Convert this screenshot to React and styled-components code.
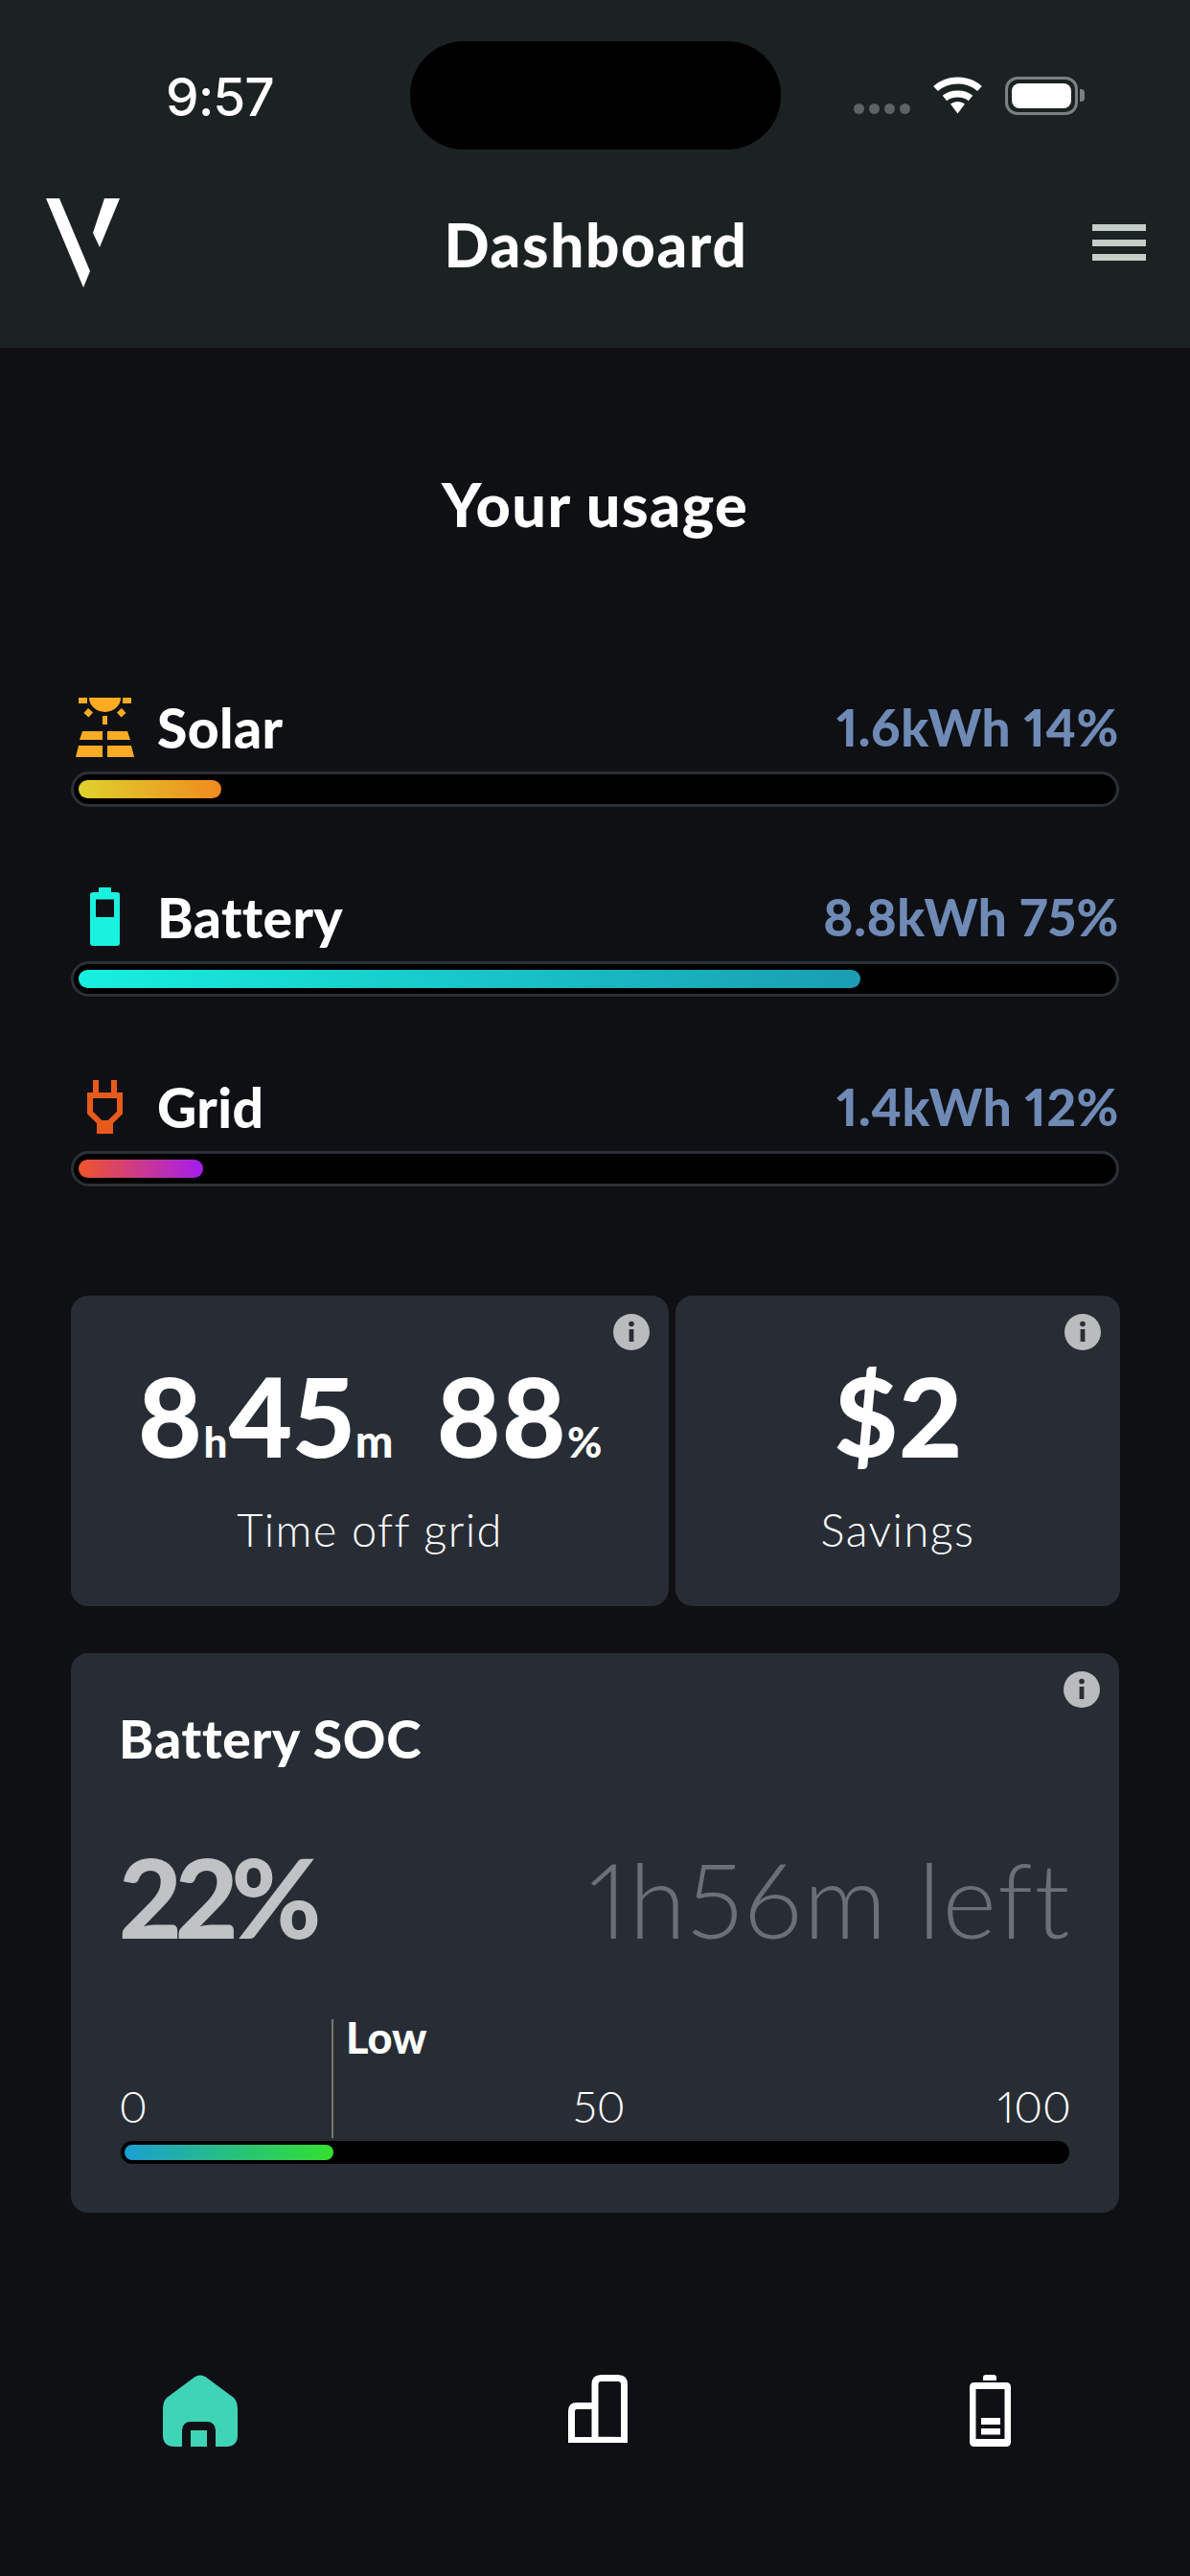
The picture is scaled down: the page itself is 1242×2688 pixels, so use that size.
import React from "react";
import styled, { createGlobalStyle } from "styled-components";

const Global = createGlobalStyle`
  html, body { margin: 0; padding: 0; background: #0e1014; }
  * { box-sizing: border-box; }
  body { font-family: "Lato", "Noto Sans", sans-serif; color: #fff; font-variant-numeric: proportional-nums lining-nums; }
`;

const Page = styled.div`
  width: 1242px;
  height: 2688px;
  background: #0e1014;
  display: flex;
  flex-direction: column;
  overflow: hidden;
`;
const Header = styled.header`
  height: 363px;
  background: #1c2122;
  display: flex;
  flex-direction: column;
`;
const StatusBar = styled.div`
  height: 173px;
  display: grid;
  grid-template-columns: 428px 387px 1fr;
`;
const Time = styled.div`
  padding: 74px 0 0 173px;
  font: 500 55px/54px "Inter", sans-serif;
  letter-spacing: -1px;
  color: #fff;
`;
const Island = styled.div`
  margin-top: 43px;
  height: 113px;
  background: #000;
  border-radius: 56px;
`;
const StatusIcons = styled.div`
  display: flex;
  align-items: flex-start;
  padding: 80px 0 0 76px;
`;
const Dots = styled.div`
  display: flex;
  gap: 5px;
  margin-top: 28px;
  width: 82px;
`;
const Dot = styled.span`
  width: 11px;
  height: 11px;
  border-radius: 50%;
  background: #5d6364;
`;
const Wifi = styled.svg`
  width: 53px;
  height: 39px;
  margin-right: 23px;
`;
const BatteryShell = styled.div`
  width: 76px;
  height: 40px;
  border: 3px solid #7b8081;
  border-radius: 13px;
  padding: 4px;
`;
const BatteryCore = styled.div`
  height: 100%;
  background: #fff;
  border-radius: 8px;
`;
const BatteryNub = styled.div`
  width: 5px;
  height: 13px;
  margin: 13px 0 0 2px;
  background: #7b8081;
  border-radius: 0 4px 4px 0;
`;
const NavBar = styled.nav`
  flex: 1;
  display: grid;
  grid-template-columns: 1fr auto 1fr;
  align-items: flex-start;
  padding: 32px 46px 0 48px;
`;
const Logo = styled.svg`
  width: 78px;
  height: 96px;
`;
const Title = styled.h1`
  margin: 18px 0 0;
  font-size: 62px;
  line-height: 64px;
  font-weight: 900;
  letter-spacing: 1.7px;
`;
const Burger = styled.div`
  justify-self: end;
  margin-top: 29px;
  width: 56px;
  display: flex;
  flex-direction: column;
  gap: 8.5px;
`;
const BurgerLine = styled.span`
  height: 7px;
  background: #c4cdc6;
`;
const Main = styled.main`
  padding: 0 74px;
  display: flex;
  flex-direction: column;
`;
const Heading = styled.h2`
  margin: 131px 0 0;
  height: 64px;
  text-align: center;
  font-size: 63px;
  line-height: 64px;
  font-weight: 900;
  letter-spacing: 1.4px;
`;
const Usage = styled.section`
  margin-top: 169px;
  display: flex;
  flex-direction: column;
  gap: 83px;
`;
const UsageRow = styled.div`
  display: flex;
  flex-direction: column;
  gap: 15px;
`;
const UsageHead = styled.div`
  height: 63px;
  display: flex;
  align-items: center;
  position: relative;
`;
const IconSlot = styled.div`
  width: 91px;
  height: 63px;
  display: flex;
  align-items: center;
  justify-content: center;
  padding-right: 20px;
`;
const UsageLabel = styled.span`
  font-size: 57px;
  font-weight: 900;
  letter-spacing: 0.4px;
  margin-left: -1px;
`;
const UsageValue = styled.span`
  margin-left: auto;
  font-size: 53px;
  font-weight: 900;
  letter-spacing: 0.6px;
  color: #6f8ab5;
`;
const Track = styled.div`
  height: 37px;
  background: #000;
  border: 3px solid #2b2f37;
  border-radius: 19px;
  padding: 6px 5px;
`;
const Fill = styled.div`
  height: 19px;
  border-radius: 10px;
  background: linear-gradient(90deg, ${(p) => p.$from}, ${(p) => p.$to});
`;
const CardRow = styled.section`
  margin-top: 114px;
  display: grid;
  grid-template-columns: 624px 464px;
  gap: 7px;
`;
const Card = styled.div`
  position: relative;
  height: 324px;
  background: #282d35;
  border-radius: 18px;
  display: flex;
  flex-direction: column;
  align-items: center;
  padding-top: 65px;
`;
const InfoBadge = styled.svg`
  position: absolute;
  top: 19px;
  right: 20px;
  width: 38px;
  height: 38px;
`;
const BigStat = styled.div`
  height: 118px;
  display: flex;
  align-items: baseline;
  font-size: 115px;
  line-height: 118px;
  font-weight: 900;
`;
const Unit = styled.span`
  font-size: ${(p) => p.$size || 44}px;
  font-weight: 900;
  margin: 0 ${(p) => p.$right || 0}px 0 1px;
`;
const CardCaption = styled.div`
  margin-top: 33px;
  font-size: 47px;
  line-height: 56px;
  font-weight: 300;
  letter-spacing: 1.4px;
`;
const SocCard = styled.section`
  position: relative;
  margin-top: 49px;
  height: 584px;
  background: #282d35;
  border-radius: 18px;
  padding: 59px 50px 0;
  display: flex;
  flex-direction: column;
`;
const SocTitle = styled.h3`
  margin: 0;
  height: 60px;
  font-size: 55px;
  line-height: 60px;
  font-weight: 900;
  letter-spacing: 0.8px;
`;
const SocStats = styled.div`
  margin-top: 70px;
  display: flex;
  justify-content: space-between;
  align-items: baseline;
`;
const SocPercent = styled.span`
  font-size: 114px;
  line-height: 130px;
  font-weight: 900;
  letter-spacing: -7px;
  color: #c0c2c5;
`;
const SocLeft = styled.span`
  font-size: 108px;
  line-height: 130px;
  font-weight: 300;
  color: #6b6f77;
  letter-spacing: 1.6px;
`;
const Scale = styled.div`
  position: relative;
  margin-top: 61px;
  height: 124px;
  display: flex;
  align-items: flex-end;
  justify-content: space-between;
  font-size: 46px;
  line-height: 50px;
  font-weight: 300;
  padding-bottom: 8px;
`;
const LowMark = styled.div`
  position: absolute;
  left: 222px;
  top: 0;
  width: 2px;
  height: 124px;
  background: #7a7a66;
`;
const LowLabel = styled.span`
  position: absolute;
  left: 237px;
  top: -4px;
  font-size: 45px;
  line-height: 46px;
  font-weight: 900;
`;
const ScaleTick = styled.span`
  margin-left: ${(p) => p.$shift || 0}px;
`;
const SocTrack = styled.div`
  margin: 3px 2px 0;
  height: 24px;
  background: #000;
  border-radius: 12px;
  padding: 4px;
`;
const SocFill = styled.div`
  width: 218px;
  height: 16px;
  border-radius: 8px;
  background: linear-gradient(90deg, #1a9fd2, #33e02f);
`;
const TabBar = styled.nav`
  margin-top: 169px;
  display: grid;
  grid-template-columns: 170px 78px 345px 62px 357px 43px;
  align-items: flex-start;
`;
const TabIcon = styled.svg`
  grid-column: ${(p) => p.$col};
  display: block;
`;

const Info = () => (
  <InfoBadge viewBox="0 0 38 38">
    <circle cx="19" cy="19" r="19" fill="#b9bbbd" />
    <circle cx="19" cy="10.5" r="2.8" fill="#282d35" />
    <rect x="16.6" y="16" width="4.8" height="13" fill="#282d35" />
  </InfoBadge>
);

const SolarIcon = () => (
  <svg width="61" height="62" viewBox="0 0 61 62" fill="#fdab23">
    <path d="M14 0H47A16.5 15 0 0 1 14 0Z" />
    <rect x="3" y="0" width="9" height="6" />
    <rect x="49" y="0" width="9" height="6" />
    <path d="M13 11L18 15.5L13.5 20.5L8.5 16Z" />
    <path d="M48 11L43 15.5L47.5 20.5L52.5 16Z" />
    <rect x="28" y="19" width="5" height="9" />
    <path d="M7 35H28V44H4Z" />
    <path d="M33 35H54L57 44H33Z" />
    <path d="M3 50H28V62H0Z" />
    <path d="M33 50H58L61 62H33Z" />
  </svg>
);
const BatteryIcon = () => (
  <svg width="31" height="61" viewBox="0 0 31 61" fill="#1af2e0">
    <path
      fillRule="evenodd"
      d="M9 0H22V5H28Q31 5 31 8V58Q31 61 28 61H3Q0 61 0 58V8Q0 5 3 5H9ZM6 12.5V31H25V12.5Z"
    />
  </svg>
);
const PlugIcon = () => (
  <svg width="37" height="56" viewBox="0 0 37 56" fill="none">
    <path d="M6 0H12V14H6ZM25 0H31V14H25Z" fill="#e85a1c" />
    <path d="M3 16H34V34L24 44V53H13V44L3 34Z" stroke="#e85a1c" strokeWidth="6" />
    <rect x="15" y="42" width="7" height="8" fill="#e85a1c" />
  </svg>
);

const rows = [
  { key: "Solar", icon: <SolarIcon />, value: "1.6kWh 14%", width: 149, from: "#dfd22d", to: "#f08a1e" },
  { key: "Battery", icon: <BatteryIcon />, value: "8.8kWh 75%", width: 816, from: "#17efe0", to: "#1a9db2" },
  { key: "Grid", icon: <PlugIcon />, value: "1.4kWh 12%", width: 130, from: "#f0552a", to: "#a51df0" },
];

export default function App() {
  return (
    <Page>
      <Global />
      <Header>
        <StatusBar>
          <Time>9:57</Time>
          <Island />
          <StatusIcons>
            <Dots>
              <Dot />
              <Dot />
              <Dot />
              <Dot />
            </Dots>
            <Wifi viewBox="0 0 53 39" fill="none" stroke="#fff" strokeWidth="7">
              <path d="M3.5 12.5C16 1 37 1 49.5 12.5" />
              <path d="M13 22.5C20 16.5 33 16.5 40 22.5" />
              <path d="M19 28.5L26.5 38.5L34 28.5C29.500 25 23.500 25 19 28.500Z" fill="#fff" stroke="none" />
            </Wifi>
            <BatteryShell>
              <BatteryCore />
            </BatteryShell>
            <BatteryNub />
          </StatusIcons>
        </StatusBar>
        <NavBar>
          <Logo viewBox="0 0 78 96" fill="#fff">
            <path d="M0 2H14L46 78L39 95Z" />
            <path d="M61 2H77L56 53L49 38Z" />
          </Logo>
          <Title>Dashboard</Title>
          <Burger>
            <BurgerLine />
            <BurgerLine />
            <BurgerLine />
          </Burger>
        </NavBar>
      </Header>
      <Main>
        <Heading>Your usage</Heading>
        <Usage>
          {rows.map((r) => (
            <UsageRow key={r.key}>
              <UsageHead>
                <IconSlot>{r.icon}</IconSlot>
                <UsageLabel>{r.key}</UsageLabel>
                <UsageValue>{r.value}</UsageValue>
              </UsageHead>
              <Track>
                <Fill $from={r.from} $to={r.to} style={{ width: r.width }} />
              </Track>
            </UsageRow>
          ))}
        </Usage>
        <CardRow>
          <Card>
            <Info />
            <BigStat>
              <span>8</span>
              <Unit>h</Unit>
              <span>45</span>
              <Unit $size={47} $right={45}>m</Unit>
              <span>88</span>
              <Unit>%</Unit>
            </BigStat>
            <CardCaption>Time off grid</CardCaption>
          </Card>
          <Card>
            <Info />
            <BigStat>
              <span>$2</span>
            </BigStat>
            <CardCaption>Savings</CardCaption>
          </Card>
        </CardRow>
        <SocCard>
          <Info />
          <SocTitle>Battery SOC</SocTitle>
          <SocStats>
            <SocPercent>22%</SocPercent>
            <SocLeft>1h56m left</SocLeft>
          </SocStats>
          <Scale>
            <LowMark />
            <LowLabel>Low</LowLabel>
            <ScaleTick>0</ScaleTick>
            <ScaleTick $shift={56}>50</ScaleTick>
            <ScaleTick>100</ScaleTick>
          </Scale>
          <SocTrack>
            <SocFill />
          </SocTrack>
        </SocCard>
      </Main>
      <TabBar>
        <TabIcon $col={2} width="78" height="75" viewBox="0 0 78 75">
          <path
            d="M33 2.500Q39 -1.500 45 2.500L74 24Q78 28 78 36V63Q78 75 66 75H12Q0 75 0 63V36Q0 28 4 24Z"
            fill="#3fd4b6"
          />
          <path d="M24.500 75V58Q24.500 53.500 29 53.500H46Q50.500 53.500 50.500 58V75" fill="#3fd4b6" stroke="#0e1014" strokeWidth="9" />
        </TabIcon>
        <TabIcon $col={4} width="62" height="71" viewBox="0 0 62 71" fill="none" stroke="#fff" strokeWidth="7">
          <path d="M28 68V10Q28 3.500 34.500 3.500H52Q58.500 3.500 58.500 10V68.500Z" />
          <path d="M28 68.500H3.500V38Q3.500 32.500 9 32.500H28" />
        </TabIcon>
        <TabIcon $col={6} width="43" height="75" viewBox="0 0 43 75" fill="#fff">
          <path d="M14 6V3Q14 0 17 0H25Q28 0 28 3V6Z" />
          <path
            fillRule="evenodd"
            d="M5 8H38Q43 8 43 13V70Q43 75 38 75H5Q0 75 0 70V13Q0 8 5 8ZM6.500 15V67H36.500V15Z"
          />
          <rect x="12" y="45" width="20" height="7" />
          <rect x="12" y="56" width="20" height="6.500" />
        </TabIcon>
      </TabBar>
    </Page>
  );
}
